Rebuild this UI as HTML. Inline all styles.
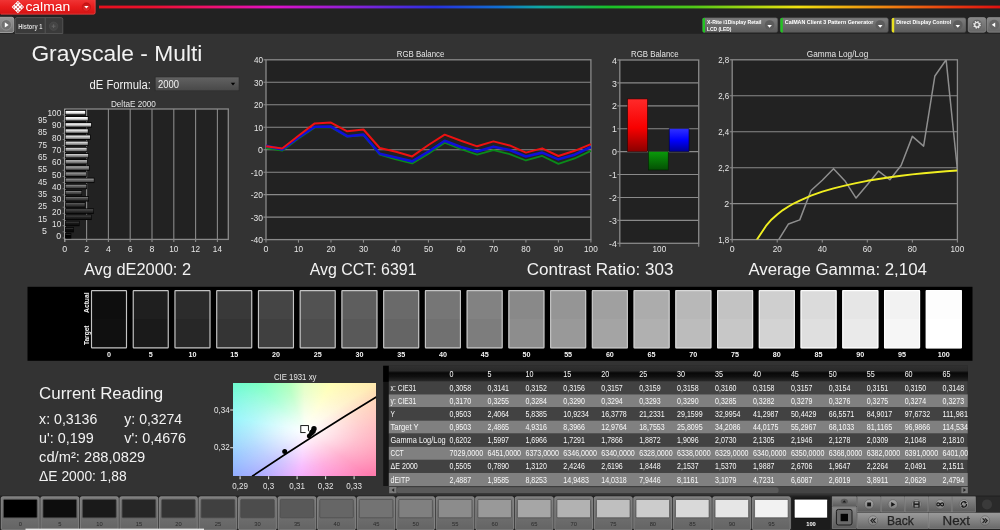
<!DOCTYPE html>
<html lang="en"><head><meta charset="utf-8"><title>Calman - Grayscale Multi</title>
<style>html,body{margin:0;padding:0;background:#333;overflow:hidden}body{width:1000px;height:530px;position:relative;font-family:"Liberation Sans", "DejaVu Sans", sans-serif}svg{position:absolute;left:0;top:0;display:block;will-change:transform}svg text{font-family:"Liberation Sans", "DejaVu Sans", sans-serif;white-space:pre}</style></head><body>
<div id="cie" style="position:absolute;left:233.2px;top:382.7px;width:143.1px;height:93.6px;background:radial-gradient(ellipse 90% 90% at 50% 51%, rgba(255,255,255,1) 0%, rgba(255,255,255,0.84) 16%, rgba(255,255,255,0.5) 42%, rgba(255,255,255,0.2) 72%, rgba(255,255,255,0) 100%),conic-gradient(from 0deg at 50% 51%, #d4ffa4 0deg, #ffff90 30deg, #ffe8a0 56deg, #ffc4a0 68deg, #ff98a0 88deg, #ff5c9c 125deg, #ff60c0 150deg, #f080ff 185deg, #8c8cff 225deg, #70b0ff 250deg, #60f0f8 280deg, #50ffb0 315deg, #80ff98 340deg, #d4ffa4 360deg)"></div>
<svg width="1000" height="530" viewBox="0 0 1000 530">
<defs>
<linearGradient id="rainbow" x1="0" x2="1" y1="0" y2="0"><stop offset="0" stop-color="#e8101c"/><stop offset="0.06" stop-color="#ec1030"/><stop offset="0.12" stop-color="#f0106a"/><stop offset="0.194" stop-color="#e010c8"/><stop offset="0.276" stop-color="#9020d8"/><stop offset="0.373" stop-color="#2830e0"/><stop offset="0.445" stop-color="#1070d0"/><stop offset="0.49" stop-color="#10a8a0"/><stop offset="0.566" stop-color="#18c028"/><stop offset="0.66" stop-color="#50c818"/><stop offset="0.73" stop-color="#b0d810"/><stop offset="0.776" stop-color="#f0e010"/><stop offset="0.878" stop-color="#f08010"/><stop offset="0.95" stop-color="#e83810"/><stop offset="1" stop-color="#e01010"/></linearGradient>
<linearGradient id="redbtn" x1="0" x2="0" y1="0" y2="1"><stop offset="0" stop-color="#f03434"/><stop offset="0.5" stop-color="#e81c1c"/><stop offset="1" stop-color="#d21313"/></linearGradient>
<linearGradient id="gbtn" x1="0" x2="0" y1="0" y2="1"><stop offset="0" stop-color="#7e7e7e"/><stop offset="1" stop-color="#5a5a5a"/></linearGradient>
<linearGradient id="redc" x1="0" x2="0" y1="0" y2="1"><stop offset="0" stop-color="#c41010"/><stop offset="1" stop-color="#ea3030"/></linearGradient>
<linearGradient id="gbtn3" x1="0" x2="0" y1="0" y2="1"><stop offset="0" stop-color="#989898"/><stop offset="1" stop-color="#707070"/></linearGradient>
<linearGradient id="gbtn2" x1="0" x2="0" y1="0" y2="1"><stop offset="0" stop-color="#888"/><stop offset="1" stop-color="#666"/></linearGradient>
<linearGradient id="ddl" x1="0" x2="0" y1="0" y2="1"><stop offset="0" stop-color="#626262"/><stop offset="1" stop-color="#484848"/></linearGradient>
<linearGradient id="thead" x1="0" x2="0" y1="0" y2="1"><stop offset="0" stop-color="#303030"/><stop offset="0.32" stop-color="#2a2a2a"/><stop offset="0.46" stop-color="#080808"/><stop offset="0.7" stop-color="#101010"/><stop offset="1" stop-color="#282828"/></linearGradient>
<linearGradient id="barR" x1="0" x2="0" y1="0" y2="1"><stop offset="0" stop-color="#ff2a2a"/><stop offset="0.55" stop-color="#f80000"/><stop offset="1" stop-color="#8a0000"/></linearGradient>
<linearGradient id="barG" x1="0" x2="0" y1="0" y2="1"><stop offset="0" stop-color="#0a9a0a"/><stop offset="1" stop-color="#045004"/></linearGradient>
<linearGradient id="barB" x1="0" x2="0" y1="0" y2="1"><stop offset="0" stop-color="#3030ff"/><stop offset="0.5" stop-color="#0000ff"/><stop offset="1" stop-color="#000090"/></linearGradient>
</defs>
<rect x="0.00" y="0.00" width="1000.00" height="33.80" fill="#222222" />
<rect x="0.00" y="495.50" width="1000.00" height="34.50" fill="#232323" />
<path d="M0 0H95.5V12.5Q95.5 14.5 93.5 14.5H1Q0 14.5 0 13.5Z" fill="url(#redbtn)"/>
<path d="M95.1 0V12.5Q95.1 14.1 93.5 14.1H1" fill="none" stroke="#f07070" stroke-opacity="0.55" stroke-width="0.8"/>
<rect x="99.00" y="5.60" width="901.00" height="2.80" fill="url(#rainbow)" />
<path d="M17.9 0.7000000000000002L24.099999999999998 7.0L17.9 13.3L11.7 7.0Z" fill="#fff"/>
<g fill="#c22424" fill-opacity="0.85">
<rect x="17.05" y="6.15" width="1.7" height="1.7"/>
<rect x="19.15" y="8.25" width="1.7" height="1.7"/>
<rect x="14.95" y="8.25" width="1.7" height="1.7"/>
<rect x="19.15" y="4.05" width="1.7" height="1.7"/>
<rect x="14.95" y="4.05" width="1.7" height="1.7"/>
</g><g fill="#d63030" fill-opacity="0.7">
<rect x="17.15" y="10.45" width="1.5" height="1.5"/>
<rect x="17.15" y="2.05" width="1.5" height="1.5"/>
<rect x="21.35" y="6.25" width="1.5" height="1.5"/>
<rect x="12.95" y="6.25" width="1.5" height="1.5"/>
</g>
<text x="25.40" y="10.60" font-size="12.8" fill="#ffffff" textLength="44.80" lengthAdjust="spacingAndGlyphs">calman</text>
<circle cx="86.4" cy="7" r="4.2" fill="url(#redc)" stroke="#c01212" stroke-width="0.7"/>
<path d="M84.2 5.9H88.6L86.4 8.6Z" fill="#fff"/>
<rect x="-2" y="17.3" width="15.8" height="15.2" rx="2" fill="url(#gbtn3)" stroke="#b0b0b0" stroke-width="0.8"/>
<circle cx="6.3" cy="24.9" r="5.2" fill="#707070" stroke="#a0a0a0" stroke-width="0.6"/>
<path d="M4.8 22.3L8.6 24.9L4.8 27.5Z" fill="#fff"/>
<path d="M15.2 33.5V19.3Q15.2 17.6 17 17.6H61Q62.8 17.6 62.8 19.3V33.5Z" fill="#3a3a3a" stroke="#5c5c5c" stroke-width="0.8"/>
<path d="M45.2 18V33.5" stroke="#5c5c5c" stroke-width="0.8"/>
<text x="18.20" y="28.70" font-size="6.3" fill="#d8d8d8" font-weight="bold" textLength="24.20" lengthAdjust="spacingAndGlyphs">History 1</text>
<circle cx="53.6" cy="26.2" r="4.2" fill="#444" stroke="#505050" stroke-width="0.5"/>
<path d="M53.6 24.3V28.1M51.7 26.2H55.5" stroke="#666" stroke-width="0.9"/>
<rect x="702.4" y="17.8" width="75.39999999999998" height="14.8" rx="2" fill="url(#gbtn)" stroke="#444" stroke-width="0.5"/>
<path d="M702.6 19.3Q702.6 18 704.0 18H705.0V32.4H704.0Q702.6 32.4 702.6 31Z" fill="#22c422"/>
<circle cx="769.5999999999999" cy="25.0" r="4.8" fill="#5c5c5c"/>
<path d="M767.3 24.9H771.8999999999999L769.5999999999999 27.8Z" fill="#fff"/>
<text x="707.00" y="24.00" font-size="5.6" fill="#fff" font-weight="bold" textLength="54.50" lengthAdjust="spacingAndGlyphs">X-Rite i1Display Retail</text>
<text x="707.00" y="30.80" font-size="5.6" fill="#fff" font-weight="bold" textLength="24.50" lengthAdjust="spacingAndGlyphs">LCD (LED)</text>
<rect x="780.2" y="17.8" width="108.19999999999993" height="14.8" rx="2" fill="url(#gbtn)" stroke="#444" stroke-width="0.5"/>
<path d="M780.4000000000001 19.3Q780.4000000000001 18 781.8000000000001 18H782.8000000000001V32.4H781.8000000000001Q780.4000000000001 32.4 780.4000000000001 31Z" fill="#22c422"/>
<circle cx="880.1999999999999" cy="25.0" r="4.8" fill="#5c5c5c"/>
<path d="M877.9 24.9H882.4999999999999L880.1999999999999 27.8Z" fill="#fff"/>
<text x="784.80" y="24.00" font-size="5.6" fill="#fff" font-weight="bold" textLength="88.50" lengthAdjust="spacingAndGlyphs">CalMAN Client 3 Pattern Generator</text>
<rect x="891.6" y="17.8" width="74.39999999999998" height="14.8" rx="2" fill="url(#gbtn)" stroke="#444" stroke-width="0.5"/>
<path d="M891.8000000000001 19.3Q891.8000000000001 18 893.2 18H894.2V32.4H893.2Q891.8000000000001 32.4 891.8000000000001 31Z" fill="#e8e020"/>
<circle cx="957.8" cy="25.0" r="4.8" fill="#5c5c5c"/>
<path d="M955.5 24.9H960.0999999999999L957.8 27.8Z" fill="#fff"/>
<text x="896.20" y="24.00" font-size="5.6" fill="#fff" font-weight="bold" textLength="55.00" lengthAdjust="spacingAndGlyphs">Direct Display Control</text>
<rect x="968.2" y="17.6" width="17.6" height="14.6" rx="2" fill="url(#gbtn2)" stroke="#999" stroke-width="0.6"/>
<circle cx="977.0" cy="24.8" r="5.0" fill="#666"/>
<circle cx="977.0" cy="24.8" r="3.2" fill="none" stroke="#f0f0f0" stroke-width="1.3" stroke-dasharray="1.3 1.213"/>
<circle cx="977.0" cy="24.8" r="2.3" fill="none" stroke="#f0f0f0" stroke-width="1.2"/>
<rect x="987.0" y="17.6" width="16" height="14.6" rx="2" fill="url(#gbtn2)" stroke="#999" stroke-width="0.6"/>
<circle cx="994.2" cy="24.8" r="5.0" fill="#666"/>
<path d="M995.2 22.4V27.2L991.8 24.8Z" fill="#fff"/>
<text x="31.40" y="61.40" font-size="22" fill="#f2f2f2" textLength="171.00" lengthAdjust="spacingAndGlyphs">Grayscale - Multi</text>
<text x="89.60" y="89.00" font-size="12" fill="#f2f2f2" textLength="61.20" lengthAdjust="spacingAndGlyphs">dE Formula:</text>
<rect x="155.2" y="77.0" width="83.8" height="13.8" fill="url(#ddl)" stroke="#2c2c2c" stroke-width="0.6"/>
<text x="158.00" y="88.20" font-size="10.5" fill="#f2f2f2" textLength="21.00" lengthAdjust="spacingAndGlyphs">2000</text>
<path d="M230.8 82.8H235.2L233 85.6Z" fill="#000"/>
<text x="133.40" y="106.60" font-size="8.2" fill="#e6e6e6" text-anchor="middle" textLength="45.00" lengthAdjust="spacingAndGlyphs">DeltaE 2000</text>
<rect x="64.80" y="109.00" width="163.50" height="130.40" fill="#222222" />
<path d="M86.60 109.0V241.9" stroke="#8a8a8a" stroke-width="1.1"/>
<path d="M108.40 109.0V241.9" stroke="#8a8a8a" stroke-width="1.1"/>
<path d="M130.20 109.0V241.9" stroke="#8a8a8a" stroke-width="1.1"/>
<path d="M152.00 109.0V241.9" stroke="#8a8a8a" stroke-width="1.1"/>
<path d="M173.80 109.0V241.9" stroke="#8a8a8a" stroke-width="1.1"/>
<path d="M195.60 109.0V241.9" stroke="#8a8a8a" stroke-width="1.1"/>
<path d="M217.40 109.0V241.9" stroke="#8a8a8a" stroke-width="1.1"/>
<rect x="64.8" y="109.0" width="163.50" height="130.40" fill="none" stroke="#8a8a8a" stroke-width="1.3"/>
<path d="M64.8 109.0V241.9" stroke="#a8a8a8" stroke-width="1.2"/>
<defs>
<linearGradient id="db0" x1="0" x2="0" y1="0" y2="1"><stop offset="0" stop-color="rgb(60,60,60)"/><stop offset="0.35" stop-color="rgb(0,0,0)"/><stop offset="1" stop-color="rgb(0,0,0)"/></linearGradient>
<linearGradient id="db1" x1="0" x2="0" y1="0" y2="1"><stop offset="0" stop-color="rgb(73,73,73)"/><stop offset="0.35" stop-color="rgb(13,13,13)"/><stop offset="1" stop-color="rgb(7,7,7)"/></linearGradient>
<linearGradient id="db2" x1="0" x2="0" y1="0" y2="1"><stop offset="0" stop-color="rgb(86,86,86)"/><stop offset="0.35" stop-color="rgb(26,26,26)"/><stop offset="1" stop-color="rgb(14,14,14)"/></linearGradient>
<linearGradient id="db3" x1="0" x2="0" y1="0" y2="1"><stop offset="0" stop-color="rgb(98,98,98)"/><stop offset="0.35" stop-color="rgb(38,38,38)"/><stop offset="1" stop-color="rgb(20,20,20)"/></linearGradient>
<linearGradient id="db4" x1="0" x2="0" y1="0" y2="1"><stop offset="0" stop-color="rgb(111,111,111)"/><stop offset="0.35" stop-color="rgb(51,51,51)"/><stop offset="1" stop-color="rgb(28,28,28)"/></linearGradient>
<linearGradient id="db5" x1="0" x2="0" y1="0" y2="1"><stop offset="0" stop-color="rgb(124,124,124)"/><stop offset="0.35" stop-color="rgb(64,64,64)"/><stop offset="1" stop-color="rgb(35,35,35)"/></linearGradient>
<linearGradient id="db6" x1="0" x2="0" y1="0" y2="1"><stop offset="0" stop-color="rgb(136,136,136)"/><stop offset="0.35" stop-color="rgb(76,76,76)"/><stop offset="1" stop-color="rgb(41,41,41)"/></linearGradient>
<linearGradient id="db7" x1="0" x2="0" y1="0" y2="1"><stop offset="0" stop-color="rgb(149,149,149)"/><stop offset="0.35" stop-color="rgb(89,89,89)"/><stop offset="1" stop-color="rgb(48,48,48)"/></linearGradient>
<linearGradient id="db8" x1="0" x2="0" y1="0" y2="1"><stop offset="0" stop-color="rgb(162,162,162)"/><stop offset="0.35" stop-color="rgb(102,102,102)"/><stop offset="1" stop-color="rgb(56,56,56)"/></linearGradient>
<linearGradient id="db9" x1="0" x2="0" y1="0" y2="1"><stop offset="0" stop-color="rgb(175,175,175)"/><stop offset="0.35" stop-color="rgb(115,115,115)"/><stop offset="1" stop-color="rgb(63,63,63)"/></linearGradient>
<linearGradient id="db10" x1="0" x2="0" y1="0" y2="1"><stop offset="0" stop-color="rgb(188,188,188)"/><stop offset="0.35" stop-color="rgb(128,128,128)"/><stop offset="1" stop-color="rgb(70,70,70)"/></linearGradient>
<linearGradient id="db11" x1="0" x2="0" y1="0" y2="1"><stop offset="0" stop-color="rgb(200,200,200)"/><stop offset="0.35" stop-color="rgb(140,140,140)"/><stop offset="1" stop-color="rgb(77,77,77)"/></linearGradient>
<linearGradient id="db12" x1="0" x2="0" y1="0" y2="1"><stop offset="0" stop-color="rgb(213,213,213)"/><stop offset="0.35" stop-color="rgb(153,153,153)"/><stop offset="1" stop-color="rgb(84,84,84)"/></linearGradient>
<linearGradient id="db13" x1="0" x2="0" y1="0" y2="1"><stop offset="0" stop-color="rgb(226,226,226)"/><stop offset="0.35" stop-color="rgb(166,166,166)"/><stop offset="1" stop-color="rgb(91,91,91)"/></linearGradient>
<linearGradient id="db14" x1="0" x2="0" y1="0" y2="1"><stop offset="0" stop-color="rgb(238,238,238)"/><stop offset="0.35" stop-color="rgb(178,178,178)"/><stop offset="1" stop-color="rgb(97,97,97)"/></linearGradient>
<linearGradient id="db15" x1="0" x2="0" y1="0" y2="1"><stop offset="0" stop-color="rgb(251,251,251)"/><stop offset="0.35" stop-color="rgb(191,191,191)"/><stop offset="1" stop-color="rgb(105,105,105)"/></linearGradient>
<linearGradient id="db16" x1="0" x2="0" y1="0" y2="1"><stop offset="0" stop-color="rgb(255,255,255)"/><stop offset="0.35" stop-color="rgb(204,204,204)"/><stop offset="1" stop-color="rgb(112,112,112)"/></linearGradient>
<linearGradient id="db17" x1="0" x2="0" y1="0" y2="1"><stop offset="0" stop-color="rgb(255,255,255)"/><stop offset="0.35" stop-color="rgb(217,217,217)"/><stop offset="1" stop-color="rgb(119,119,119)"/></linearGradient>
<linearGradient id="db18" x1="0" x2="0" y1="0" y2="1"><stop offset="0" stop-color="rgb(255,255,255)"/><stop offset="0.35" stop-color="rgb(230,230,230)"/><stop offset="1" stop-color="rgb(126,126,126)"/></linearGradient>
<linearGradient id="db19" x1="0" x2="0" y1="0" y2="1"><stop offset="0" stop-color="rgb(255,255,255)"/><stop offset="0.35" stop-color="rgb(242,242,242)"/><stop offset="1" stop-color="rgb(133,133,133)"/></linearGradient>
<linearGradient id="db20" x1="0" x2="0" y1="0" y2="1"><stop offset="0" stop-color="rgb(255,255,255)"/><stop offset="0.35" stop-color="rgb(255,255,255)"/><stop offset="1" stop-color="rgb(140,140,140)"/></linearGradient>
</defs>
<rect x="65.00" y="233.10" width="6.30" height="5.4" fill="#050505"/>
<rect x="65.60" y="234.05" width="5.10" height="3.5" fill="url(#db0)"/>
<path d="M62.60 238.00H64.80" stroke="#8a8a8a" stroke-width="0.8"/>
<text x="61.20" y="239.20" font-size="8.8" fill="#e6e6e6" text-anchor="end">0</text>
<rect x="65.00" y="226.94" width="8.90" height="5.4" fill="#050505"/>
<rect x="65.60" y="227.89" width="7.70" height="3.5" fill="url(#db1)"/>
<path d="M62.60 231.84H64.80" stroke="#8a8a8a" stroke-width="0.8"/>
<text x="47.00" y="233.94" font-size="8.8" fill="#e6e6e6" text-anchor="end">5</text>
<rect x="65.00" y="220.78" width="14.60" height="5.4" fill="#050505"/>
<rect x="65.60" y="221.73" width="13.40" height="3.5" fill="url(#db2)"/>
<path d="M62.60 225.68H64.80" stroke="#8a8a8a" stroke-width="0.8"/>
<text x="61.20" y="226.88" font-size="8.8" fill="#e6e6e6" text-anchor="end" textLength="9.10" lengthAdjust="spacingAndGlyphs">10</text>
<rect x="65.00" y="214.62" width="26.73" height="5.4" fill="#050505"/>
<rect x="65.60" y="215.57" width="25.53" height="3.5" fill="url(#db3)"/>
<path d="M62.60 219.52H64.80" stroke="#8a8a8a" stroke-width="0.8"/>
<text x="47.00" y="221.62" font-size="8.8" fill="#e6e6e6" text-anchor="end" textLength="9.10" lengthAdjust="spacingAndGlyphs">15</text>
<rect x="65.00" y="208.46" width="28.85" height="5.4" fill="#050505"/>
<rect x="65.60" y="209.41" width="27.65" height="3.5" fill="url(#db4)"/>
<path d="M62.60 213.36H64.80" stroke="#8a8a8a" stroke-width="0.8"/>
<text x="61.20" y="214.56" font-size="8.8" fill="#e6e6e6" text-anchor="end" textLength="9.10" lengthAdjust="spacingAndGlyphs">20</text>
<rect x="65.00" y="202.30" width="20.41" height="5.4" fill="#050505"/>
<rect x="65.60" y="203.25" width="19.21" height="3.5" fill="url(#db5)"/>
<path d="M62.60 207.20H64.80" stroke="#8a8a8a" stroke-width="0.8"/>
<text x="47.00" y="209.30" font-size="8.8" fill="#e6e6e6" text-anchor="end" textLength="9.10" lengthAdjust="spacingAndGlyphs">25</text>
<rect x="65.00" y="196.14" width="23.78" height="5.4" fill="#050505"/>
<rect x="65.60" y="197.09" width="22.58" height="3.5" fill="url(#db6)"/>
<path d="M62.60 201.04H64.80" stroke="#8a8a8a" stroke-width="0.8"/>
<text x="61.20" y="202.24" font-size="8.8" fill="#e6e6e6" text-anchor="end" textLength="9.10" lengthAdjust="spacingAndGlyphs">30</text>
<rect x="65.00" y="189.98" width="17.05" height="5.4" fill="#050505"/>
<rect x="65.60" y="190.93" width="15.85" height="3.5" fill="url(#db7)"/>
<path d="M62.60 194.88H64.80" stroke="#8a8a8a" stroke-width="0.8"/>
<text x="47.00" y="196.98" font-size="8.8" fill="#e6e6e6" text-anchor="end" textLength="9.10" lengthAdjust="spacingAndGlyphs">35</text>
<rect x="65.00" y="183.82" width="21.98" height="5.4" fill="#050505"/>
<rect x="65.60" y="184.77" width="20.78" height="3.5" fill="url(#db8)"/>
<path d="M62.60 188.72H64.80" stroke="#8a8a8a" stroke-width="0.8"/>
<text x="61.20" y="189.92" font-size="8.8" fill="#e6e6e6" text-anchor="end" textLength="9.10" lengthAdjust="spacingAndGlyphs">40</text>
<rect x="65.00" y="177.66" width="29.41" height="5.4" fill="#050505"/>
<rect x="65.60" y="178.61" width="28.21" height="3.5" fill="url(#db9)"/>
<path d="M62.60 182.56H64.80" stroke="#8a8a8a" stroke-width="0.8"/>
<text x="47.00" y="184.66" font-size="8.8" fill="#e6e6e6" text-anchor="end" textLength="9.10" lengthAdjust="spacingAndGlyphs">45</text>
<rect x="65.00" y="171.50" width="21.72" height="5.4" fill="#050505"/>
<rect x="65.60" y="172.45" width="20.52" height="3.5" fill="url(#db10)"/>
<path d="M62.60 176.40H64.80" stroke="#8a8a8a" stroke-width="0.8"/>
<text x="61.20" y="177.60" font-size="8.8" fill="#e6e6e6" text-anchor="end" textLength="9.10" lengthAdjust="spacingAndGlyphs">50</text>
<rect x="65.00" y="165.34" width="24.57" height="5.4" fill="#050505"/>
<rect x="65.60" y="166.29" width="23.37" height="3.5" fill="url(#db11)"/>
<path d="M62.60 170.24H64.80" stroke="#8a8a8a" stroke-width="0.8"/>
<text x="47.00" y="172.34" font-size="8.8" fill="#e6e6e6" text-anchor="end" textLength="9.10" lengthAdjust="spacingAndGlyphs">55</text>
<rect x="65.00" y="159.18" width="22.64" height="5.4" fill="#050505"/>
<rect x="65.60" y="160.13" width="21.44" height="3.5" fill="url(#db12)"/>
<path d="M62.60 164.08H64.80" stroke="#8a8a8a" stroke-width="0.8"/>
<text x="61.20" y="165.28" font-size="8.8" fill="#e6e6e6" text-anchor="end" textLength="9.10" lengthAdjust="spacingAndGlyphs">60</text>
<rect x="65.00" y="153.02" width="23.75" height="5.4" fill="#050505"/>
<rect x="65.60" y="153.97" width="22.55" height="3.5" fill="url(#db13)"/>
<path d="M62.60 157.92H64.80" stroke="#8a8a8a" stroke-width="0.8"/>
<text x="47.00" y="160.02" font-size="8.8" fill="#e6e6e6" text-anchor="end" textLength="9.10" lengthAdjust="spacingAndGlyphs">65</text>
<rect x="65.00" y="146.86" width="22.32" height="5.4" fill="#050505"/>
<rect x="65.60" y="147.81" width="21.12" height="3.5" fill="url(#db14)"/>
<path d="M62.60 151.76H64.80" stroke="#8a8a8a" stroke-width="0.8"/>
<text x="61.20" y="152.96" font-size="8.8" fill="#e6e6e6" text-anchor="end" textLength="9.10" lengthAdjust="spacingAndGlyphs">70</text>
<rect x="65.00" y="140.70" width="23.41" height="5.4" fill="#050505"/>
<rect x="65.60" y="141.65" width="22.21" height="3.5" fill="url(#db15)"/>
<path d="M62.60 145.60H64.80" stroke="#8a8a8a" stroke-width="0.8"/>
<text x="47.00" y="147.70" font-size="8.8" fill="#e6e6e6" text-anchor="end" textLength="9.10" lengthAdjust="spacingAndGlyphs">75</text>
<rect x="65.00" y="134.54" width="25.59" height="5.4" fill="#050505"/>
<rect x="65.60" y="135.49" width="24.39" height="3.5" fill="url(#db16)"/>
<path d="M62.60 139.44H64.80" stroke="#8a8a8a" stroke-width="0.8"/>
<text x="61.20" y="140.64" font-size="8.8" fill="#e6e6e6" text-anchor="end" textLength="9.10" lengthAdjust="spacingAndGlyphs">80</text>
<rect x="65.00" y="128.38" width="23.41" height="5.4" fill="#050505"/>
<rect x="65.60" y="129.33" width="22.21" height="3.5" fill="url(#db17)"/>
<path d="M62.60 133.28H64.80" stroke="#8a8a8a" stroke-width="0.8"/>
<text x="47.00" y="135.38" font-size="8.8" fill="#e6e6e6" text-anchor="end" textLength="9.10" lengthAdjust="spacingAndGlyphs">85</text>
<rect x="65.00" y="122.22" width="26.68" height="5.4" fill="#050505"/>
<rect x="65.60" y="123.17" width="25.48" height="3.5" fill="url(#db18)"/>
<path d="M62.60 127.12H64.80" stroke="#8a8a8a" stroke-width="0.8"/>
<text x="61.20" y="128.32" font-size="8.8" fill="#e6e6e6" text-anchor="end" textLength="9.10" lengthAdjust="spacingAndGlyphs">90</text>
<rect x="65.00" y="116.06" width="23.41" height="5.4" fill="#050505"/>
<rect x="65.60" y="117.01" width="22.21" height="3.5" fill="url(#db19)"/>
<path d="M62.60 120.96H64.80" stroke="#8a8a8a" stroke-width="0.8"/>
<text x="47.00" y="123.06" font-size="8.8" fill="#e6e6e6" text-anchor="end" textLength="9.10" lengthAdjust="spacingAndGlyphs">95</text>
<rect x="65.00" y="109.90" width="20.79" height="5.4" fill="#050505"/>
<rect x="65.60" y="110.85" width="19.59" height="3.5" fill="url(#db20)"/>
<path d="M62.60 114.80H64.80" stroke="#8a8a8a" stroke-width="0.8"/>
<text x="61.20" y="116.00" font-size="8.8" fill="#e6e6e6" text-anchor="end" textLength="13.65" lengthAdjust="spacingAndGlyphs">100</text>
<text x="64.80" y="252.00" font-size="8.8" fill="#e6e6e6" text-anchor="middle">0</text>
<text x="86.60" y="252.00" font-size="8.8" fill="#e6e6e6" text-anchor="middle">2</text>
<text x="108.40" y="252.00" font-size="8.8" fill="#e6e6e6" text-anchor="middle">4</text>
<text x="130.20" y="252.00" font-size="8.8" fill="#e6e6e6" text-anchor="middle">6</text>
<text x="152.00" y="252.00" font-size="8.8" fill="#e6e6e6" text-anchor="middle">8</text>
<text x="173.80" y="252.00" font-size="8.8" fill="#e6e6e6" text-anchor="middle" textLength="9.10" lengthAdjust="spacingAndGlyphs">10</text>
<text x="195.60" y="252.00" font-size="8.8" fill="#e6e6e6" text-anchor="middle" textLength="9.10" lengthAdjust="spacingAndGlyphs">12</text>
<text x="217.40" y="252.00" font-size="8.8" fill="#e6e6e6" text-anchor="middle" textLength="9.10" lengthAdjust="spacingAndGlyphs">14</text>
<text x="420.60" y="56.60" font-size="8.2" fill="#e6e6e6" text-anchor="middle" textLength="47.50" lengthAdjust="spacingAndGlyphs">RGB Balance</text>
<rect x="266.00" y="59.80" width="324.90" height="179.80" fill="#222222" />
<path d="M263.5 217.12H590.9" stroke="#8a8a8a" stroke-width="1.1"/>
<path d="M263.5 194.65H590.9" stroke="#8a8a8a" stroke-width="1.1"/>
<path d="M263.5 172.18H590.9" stroke="#8a8a8a" stroke-width="1.1"/>
<path d="M263.5 149.70H590.9" stroke="#8a8a8a" stroke-width="1.1"/>
<path d="M263.5 127.22H590.9" stroke="#8a8a8a" stroke-width="1.1"/>
<path d="M263.5 104.75H590.9" stroke="#8a8a8a" stroke-width="1.1"/>
<path d="M263.5 82.28H590.9" stroke="#8a8a8a" stroke-width="1.1"/>
<rect x="266.0" y="59.8" width="324.90" height="179.80" fill="none" stroke="#8a8a8a" stroke-width="1.3"/>
<path d="M263.5 239.60H266.0" stroke="#8a8a8a" stroke-width="1.1"/>
<text x="263.00" y="243.20" font-size="8.8" fill="#e6e6e6" text-anchor="end" textLength="12.30" lengthAdjust="spacingAndGlyphs">-40</text>
<text x="263.00" y="220.72" font-size="8.8" fill="#e6e6e6" text-anchor="end" textLength="12.30" lengthAdjust="spacingAndGlyphs">-30</text>
<text x="263.00" y="198.25" font-size="8.8" fill="#e6e6e6" text-anchor="end" textLength="12.30" lengthAdjust="spacingAndGlyphs">-20</text>
<text x="263.00" y="175.78" font-size="8.8" fill="#e6e6e6" text-anchor="end" textLength="12.30" lengthAdjust="spacingAndGlyphs">-10</text>
<text x="263.00" y="153.30" font-size="8.8" fill="#e6e6e6" text-anchor="end">0</text>
<text x="263.00" y="130.82" font-size="8.8" fill="#e6e6e6" text-anchor="end" textLength="9.10" lengthAdjust="spacingAndGlyphs">10</text>
<text x="263.00" y="108.35" font-size="8.8" fill="#e6e6e6" text-anchor="end" textLength="9.10" lengthAdjust="spacingAndGlyphs">20</text>
<text x="263.00" y="85.88" font-size="8.8" fill="#e6e6e6" text-anchor="end" textLength="9.10" lengthAdjust="spacingAndGlyphs">30</text>
<path d="M263.5 59.80H266.0" stroke="#8a8a8a" stroke-width="1.1"/>
<text x="263.00" y="63.40" font-size="8.8" fill="#e6e6e6" text-anchor="end" textLength="9.10" lengthAdjust="spacingAndGlyphs">40</text>
<path d="M266.00 239.6V242.6" stroke="#8a8a8a" stroke-width="1.1"/>
<text x="266.00" y="252.00" font-size="8.8" fill="#e6e6e6" text-anchor="middle">0</text>
<path d="M298.49 239.6V242.6" stroke="#8a8a8a" stroke-width="1.1"/>
<text x="298.49" y="252.00" font-size="8.8" fill="#e6e6e6" text-anchor="middle" textLength="9.10" lengthAdjust="spacingAndGlyphs">10</text>
<path d="M330.98 239.6V242.6" stroke="#8a8a8a" stroke-width="1.1"/>
<text x="330.98" y="252.00" font-size="8.8" fill="#e6e6e6" text-anchor="middle" textLength="9.10" lengthAdjust="spacingAndGlyphs">20</text>
<path d="M363.47 239.6V242.6" stroke="#8a8a8a" stroke-width="1.1"/>
<text x="363.47" y="252.00" font-size="8.8" fill="#e6e6e6" text-anchor="middle" textLength="9.10" lengthAdjust="spacingAndGlyphs">30</text>
<path d="M395.96 239.6V242.6" stroke="#8a8a8a" stroke-width="1.1"/>
<text x="395.96" y="252.00" font-size="8.8" fill="#e6e6e6" text-anchor="middle" textLength="9.10" lengthAdjust="spacingAndGlyphs">40</text>
<path d="M428.45 239.6V242.6" stroke="#8a8a8a" stroke-width="1.1"/>
<text x="428.45" y="252.00" font-size="8.8" fill="#e6e6e6" text-anchor="middle" textLength="9.10" lengthAdjust="spacingAndGlyphs">50</text>
<path d="M460.94 239.6V242.6" stroke="#8a8a8a" stroke-width="1.1"/>
<text x="460.94" y="252.00" font-size="8.8" fill="#e6e6e6" text-anchor="middle" textLength="9.10" lengthAdjust="spacingAndGlyphs">60</text>
<path d="M493.43 239.6V242.6" stroke="#8a8a8a" stroke-width="1.1"/>
<text x="493.43" y="252.00" font-size="8.8" fill="#e6e6e6" text-anchor="middle" textLength="9.10" lengthAdjust="spacingAndGlyphs">70</text>
<path d="M525.92 239.6V242.6" stroke="#8a8a8a" stroke-width="1.1"/>
<text x="525.92" y="252.00" font-size="8.8" fill="#e6e6e6" text-anchor="middle" textLength="9.10" lengthAdjust="spacingAndGlyphs">80</text>
<path d="M558.41 239.6V242.6" stroke="#8a8a8a" stroke-width="1.1"/>
<text x="558.41" y="252.00" font-size="8.8" fill="#e6e6e6" text-anchor="middle" textLength="9.10" lengthAdjust="spacingAndGlyphs">90</text>
<path d="M590.90 239.6V242.6" stroke="#8a8a8a" stroke-width="1.1"/>
<text x="590.90" y="252.00" font-size="8.8" fill="#e6e6e6" text-anchor="middle" textLength="13.65" lengthAdjust="spacingAndGlyphs">100</text>
<polyline points="266.00,148.01 282.25,150.71 298.49,138.46 314.74,127.45 330.98,127.22 347.23,136.66 363.47,135.09 379.71,154.64 395.96,159.36 412.20,163.41 428.45,153.75 444.69,142.73 460.94,149.25 477.18,154.64 493.43,150.04 509.67,154.19 525.92,160.49 542.16,155.99 558.41,163.86 574.65,158.47 590.90,150.82" fill="none" stroke="#0a8a1a" stroke-width="1.8" stroke-linejoin="round"/>
<polyline points="266.00,145.88 282.25,149.36 298.49,137.34 314.74,126.78 330.98,126.55 347.23,136.21 363.47,134.64 379.71,153.75 395.96,157.57 412.20,161.39 428.45,151.72 444.69,140.71 460.94,147.00 477.18,151.39 493.43,146.67 509.67,150.04 525.92,156.44 542.16,152.62 558.41,159.36 574.65,154.64 590.90,147.00" fill="none" stroke="#1010d8" stroke-width="2.6" stroke-linejoin="round"/>
<polyline points="266.00,146.33 282.25,148.58 298.49,135.77 314.74,123.40 330.98,122.51 347.23,131.27 363.47,129.47 379.71,148.01 395.96,151.72 412.20,156.44 428.45,144.98 444.69,134.64 460.94,140.71 477.18,146.33 493.43,141.38 509.67,145.43 525.92,152.62 542.16,148.35 558.41,155.99 574.65,150.82 590.90,144.08" fill="none" stroke="#ee1111" stroke-width="2.0" stroke-linejoin="round"/>
<text x="654.80" y="56.60" font-size="8.2" fill="#e6e6e6" text-anchor="middle" textLength="47.50" lengthAdjust="spacingAndGlyphs">RGB Balance</text>
<rect x="619.80" y="60.00" width="78.90" height="183.30" fill="#222222" />
<path d="M617.3 220.39H698.7" stroke="#8a8a8a" stroke-width="1.1"/>
<path d="M617.3 197.48H698.7" stroke="#8a8a8a" stroke-width="1.1"/>
<path d="M617.3 174.56H698.7" stroke="#8a8a8a" stroke-width="1.1"/>
<path d="M617.3 151.65H698.7" stroke="#8a8a8a" stroke-width="1.1"/>
<path d="M617.3 128.74H698.7" stroke="#8a8a8a" stroke-width="1.1"/>
<path d="M617.3 105.83H698.7" stroke="#8a8a8a" stroke-width="1.1"/>
<path d="M617.3 82.91H698.7" stroke="#8a8a8a" stroke-width="1.1"/>
<rect x="619.8" y="60.0" width="78.90" height="183.30" fill="none" stroke="#8a8a8a" stroke-width="1.3"/>
<path d="M617.3 243.30H619.8" stroke="#8a8a8a" stroke-width="1.1"/>
<text x="616.80" y="246.90" font-size="8.8" fill="#e6e6e6" text-anchor="end" textLength="7.75" lengthAdjust="spacingAndGlyphs">-4</text>
<text x="616.80" y="223.99" font-size="8.8" fill="#e6e6e6" text-anchor="end" textLength="7.75" lengthAdjust="spacingAndGlyphs">-3</text>
<text x="616.80" y="201.08" font-size="8.8" fill="#e6e6e6" text-anchor="end" textLength="7.75" lengthAdjust="spacingAndGlyphs">-2</text>
<text x="616.80" y="178.16" font-size="8.8" fill="#e6e6e6" text-anchor="end" textLength="7.75" lengthAdjust="spacingAndGlyphs">-1</text>
<text x="616.80" y="155.25" font-size="8.8" fill="#e6e6e6" text-anchor="end">0</text>
<text x="616.80" y="132.34" font-size="8.8" fill="#e6e6e6" text-anchor="end">1</text>
<text x="616.80" y="109.42" font-size="8.8" fill="#e6e6e6" text-anchor="end">2</text>
<text x="616.80" y="86.51" font-size="8.8" fill="#e6e6e6" text-anchor="end">3</text>
<path d="M617.3 60.00H619.8" stroke="#8a8a8a" stroke-width="1.1"/>
<text x="616.80" y="63.60" font-size="8.8" fill="#e6e6e6" text-anchor="end">4</text>
<path d="M619.8 243.3V246.8M698.7 243.3V246.8" stroke="#8a8a8a" stroke-width="1.1"/>
<text x="659.40" y="252.00" font-size="8.8" fill="#e6e6e6" text-anchor="middle" textLength="13.65" lengthAdjust="spacingAndGlyphs">100</text>
<rect x="627.6" y="98.95" width="19.8" height="52.70" fill="url(#barR)" stroke="#300" stroke-width="0.6"/>
<rect x="648.4" y="151.65" width="19.8" height="18.33" fill="url(#barG)" stroke="#020" stroke-width="0.6"/>
<rect x="669.2" y="128.74" width="19.8" height="22.91" fill="url(#barB)" stroke="#003" stroke-width="0.6"/>
<text x="837.50" y="56.60" font-size="8.2" fill="#e6e6e6" text-anchor="middle" textLength="61.50" lengthAdjust="spacingAndGlyphs">Gamma Log/Log</text>
<rect x="732.20" y="59.80" width="225.20" height="179.80" fill="#222222" />
<path d="M729.7 203.64H957.4" stroke="#8a8a8a" stroke-width="1.1"/>
<path d="M729.7 167.68H957.4" stroke="#8a8a8a" stroke-width="1.1"/>
<path d="M729.7 131.72H957.4" stroke="#8a8a8a" stroke-width="1.1"/>
<path d="M729.7 95.76H957.4" stroke="#8a8a8a" stroke-width="1.1"/>
<rect x="732.2" y="59.8" width="225.20" height="179.80" fill="none" stroke="#8a8a8a" stroke-width="1.3"/>
<path d="M729.7 239.60H732.2" stroke="#8a8a8a" stroke-width="1.1"/>
<text x="729.20" y="243.20" font-size="8.8" fill="#e6e6e6" text-anchor="end" textLength="11.05" lengthAdjust="spacingAndGlyphs">1,8</text>
<text x="729.20" y="207.24" font-size="8.8" fill="#e6e6e6" text-anchor="end">2</text>
<text x="729.20" y="171.28" font-size="8.8" fill="#e6e6e6" text-anchor="end" textLength="11.05" lengthAdjust="spacingAndGlyphs">2,2</text>
<text x="729.20" y="135.32" font-size="8.8" fill="#e6e6e6" text-anchor="end" textLength="11.05" lengthAdjust="spacingAndGlyphs">2,4</text>
<text x="729.20" y="99.36" font-size="8.8" fill="#e6e6e6" text-anchor="end" textLength="11.05" lengthAdjust="spacingAndGlyphs">2,6</text>
<path d="M729.7 59.80H732.2" stroke="#8a8a8a" stroke-width="1.1"/>
<text x="729.20" y="63.40" font-size="8.8" fill="#e6e6e6" text-anchor="end" textLength="11.05" lengthAdjust="spacingAndGlyphs">2,8</text>
<path d="M732.20 239.6V242.6" stroke="#8a8a8a" stroke-width="1.1"/>
<text x="732.20" y="252.00" font-size="8.8" fill="#e6e6e6" text-anchor="middle">0</text>
<path d="M777.24 239.6V242.6" stroke="#8a8a8a" stroke-width="1.1"/>
<text x="777.24" y="252.00" font-size="8.8" fill="#e6e6e6" text-anchor="middle" textLength="9.10" lengthAdjust="spacingAndGlyphs">20</text>
<path d="M822.28 239.6V242.6" stroke="#8a8a8a" stroke-width="1.1"/>
<text x="822.28" y="252.00" font-size="8.8" fill="#e6e6e6" text-anchor="middle" textLength="9.10" lengthAdjust="spacingAndGlyphs">40</text>
<path d="M867.32 239.6V242.6" stroke="#8a8a8a" stroke-width="1.1"/>
<text x="867.32" y="252.00" font-size="8.8" fill="#e6e6e6" text-anchor="middle" textLength="9.10" lengthAdjust="spacingAndGlyphs">60</text>
<path d="M912.36 239.6V242.6" stroke="#8a8a8a" stroke-width="1.1"/>
<text x="912.36" y="252.00" font-size="8.8" fill="#e6e6e6" text-anchor="middle" textLength="9.10" lengthAdjust="spacingAndGlyphs">80</text>
<path d="M957.40 239.6V242.6" stroke="#8a8a8a" stroke-width="1.1"/>
<text x="957.40" y="252.00" font-size="8.8" fill="#e6e6e6" text-anchor="middle" textLength="13.65" lengthAdjust="spacingAndGlyphs">100</text>
<clipPath id="gclip"><rect x="732.2" y="59.8" width="225.20" height="179.80"/></clipPath>
<polyline points="732.20,451.73 743.46,275.61 754.72,258.19 765.98,252.35 777.24,242.01 788.50,223.92 799.76,219.89 811.02,190.51 822.28,180.18 833.54,168.65 844.80,180.66 856.06,198.08 867.32,184.80 878.58,171.10 889.84,179.73 901.10,165.52 912.36,136.39 923.62,146.10 934.88,75.98 946.14,59.80 957.40,169.48" fill="none" stroke="#8e8e8e" stroke-width="1.5" stroke-linejoin="round" clip-path="url(#gclip)"/>
<polyline points="752.47,247.69 756.97,239.60 761.48,232.77 765.98,225.94 771.61,219.46 777.24,214.43 782.87,210.11 788.50,206.52 794.13,203.28 799.76,200.58 811.02,195.73 822.28,191.59 833.54,188.36 844.80,185.66 856.06,183.14 867.32,180.81 878.58,179.01 889.84,177.21 901.10,175.77 912.36,174.33 923.62,173.25 934.88,172.18 946.14,171.28 957.40,170.56" fill="none" stroke="#f0ee20" stroke-width="1.9" stroke-linejoin="round" clip-path="url(#gclip)"/>
<text x="83.90" y="275.30" font-size="16" fill="#f2f2f2" textLength="107.20" lengthAdjust="spacingAndGlyphs">Avg dE2000: 2</text>
<text x="309.80" y="275.30" font-size="16" fill="#f2f2f2" textLength="106.70" lengthAdjust="spacingAndGlyphs">Avg CCT: 6391</text>
<text x="526.70" y="275.30" font-size="16" fill="#f2f2f2" textLength="146.70" lengthAdjust="spacingAndGlyphs">Contrast Ratio: 303</text>
<text x="748.40" y="275.30" font-size="16" fill="#f2f2f2" textLength="178.50" lengthAdjust="spacingAndGlyphs">Average Gamma: 2,104</text>
<rect x="27.50" y="286.80" width="945.00" height="74.00" fill="#000000" />
<rect x="91.00" y="290.2" width="36" height="29" fill="rgb(14,14,14)"/>
<rect x="91.00" y="319" width="36" height="29.2" fill="rgb(16,16,16)"/>
<rect x="91.50" y="290.6" width="35.0" height="57.2" rx="0.6" fill="none" stroke="rgb(196,196,196)" stroke-width="1.15"/>
<text x="109.00" y="356.50" font-size="7.2" fill="#f4f4f4" text-anchor="middle" font-weight="bold">0</text>
<rect x="132.74" y="290.2" width="36" height="29" fill="rgb(31,31,31)"/>
<rect x="132.74" y="319" width="36" height="29.2" fill="rgb(26,26,26)"/>
<rect x="133.24" y="290.6" width="35.0" height="57.2" rx="0.6" fill="none" stroke="rgb(196,196,196)" stroke-width="1.15"/>
<text x="150.74" y="356.50" font-size="7.2" fill="#f4f4f4" text-anchor="middle" font-weight="bold">5</text>
<rect x="174.48" y="290.2" width="36" height="29" fill="rgb(44,44,44)"/>
<rect x="174.48" y="319" width="36" height="29.2" fill="rgb(39,39,39)"/>
<rect x="174.98" y="290.6" width="35.0" height="57.2" rx="0.6" fill="none" stroke="rgb(196,196,196)" stroke-width="1.15"/>
<text x="192.48" y="356.50" font-size="7.2" fill="#f4f4f4" text-anchor="middle" font-weight="bold">10</text>
<rect x="216.22" y="290.2" width="36" height="29" fill="rgb(57,57,57)"/>
<rect x="216.22" y="319" width="36" height="29.2" fill="rgb(52,52,52)"/>
<rect x="216.72" y="290.6" width="35.0" height="57.2" rx="0.6" fill="none" stroke="rgb(196,196,196)" stroke-width="1.15"/>
<text x="234.22" y="356.50" font-size="7.2" fill="#f4f4f4" text-anchor="middle" font-weight="bold">15</text>
<rect x="257.96" y="290.2" width="36" height="29" fill="rgb(69,69,69)"/>
<rect x="257.96" y="319" width="36" height="29.2" fill="rgb(64,64,64)"/>
<rect x="258.46" y="290.6" width="35.0" height="57.2" rx="0.6" fill="none" stroke="rgb(196,196,196)" stroke-width="1.15"/>
<text x="275.96" y="356.50" font-size="7.2" fill="#f4f4f4" text-anchor="middle" font-weight="bold">20</text>
<rect x="299.70" y="290.2" width="36" height="29" fill="rgb(82,82,82)"/>
<rect x="299.70" y="319" width="36" height="29.2" fill="rgb(77,77,77)"/>
<rect x="300.20" y="290.6" width="35.0" height="57.2" rx="0.6" fill="none" stroke="rgb(196,196,196)" stroke-width="1.15"/>
<text x="317.70" y="356.50" font-size="7.2" fill="#f4f4f4" text-anchor="middle" font-weight="bold">25</text>
<rect x="341.44" y="290.2" width="36" height="29" fill="rgb(94,94,94)"/>
<rect x="341.44" y="319" width="36" height="29.2" fill="rgb(89,89,89)"/>
<rect x="341.94" y="290.6" width="35.0" height="57.2" rx="0.6" fill="none" stroke="rgb(196,196,196)" stroke-width="1.15"/>
<text x="359.44" y="356.50" font-size="7.2" fill="#f4f4f4" text-anchor="middle" font-weight="bold">30</text>
<rect x="383.18" y="290.2" width="36" height="29" fill="rgb(106,106,106)"/>
<rect x="383.18" y="319" width="36" height="29.2" fill="rgb(101,101,101)"/>
<rect x="383.68" y="290.6" width="35.0" height="57.2" rx="0.6" fill="none" stroke="rgb(196,196,196)" stroke-width="1.15"/>
<text x="401.18" y="356.50" font-size="7.2" fill="#f4f4f4" text-anchor="middle" font-weight="bold">35</text>
<rect x="424.92" y="290.2" width="36" height="29" fill="rgb(118,118,118)"/>
<rect x="424.92" y="319" width="36" height="29.2" fill="rgb(113,113,113)"/>
<rect x="425.42" y="290.6" width="35.0" height="57.2" rx="0.6" fill="none" stroke="rgb(196,196,196)" stroke-width="1.15"/>
<text x="442.92" y="356.50" font-size="7.2" fill="#f4f4f4" text-anchor="middle" font-weight="bold">40</text>
<rect x="466.66" y="290.2" width="36" height="29" fill="rgb(130,130,130)"/>
<rect x="466.66" y="319" width="36" height="29.2" fill="rgb(125,125,125)"/>
<rect x="467.16" y="290.6" width="35.0" height="57.2" rx="0.6" fill="none" stroke="rgb(196,196,196)" stroke-width="1.15"/>
<text x="484.66" y="356.50" font-size="7.2" fill="#f4f4f4" text-anchor="middle" font-weight="bold">45</text>
<rect x="508.40" y="290.2" width="36" height="29" fill="rgb(137,137,137)"/>
<rect x="508.40" y="319" width="36" height="29.2" fill="rgb(141,141,141)"/>
<rect x="508.90" y="290.6" width="35.0" height="57.2" rx="0.6" fill="none" stroke="rgb(196,196,196)" stroke-width="1.15"/>
<text x="526.40" y="356.50" font-size="7.2" fill="#f4f4f4" text-anchor="middle" font-weight="bold">50</text>
<rect x="550.14" y="290.2" width="36" height="29" fill="rgb(149,149,149)"/>
<rect x="550.14" y="319" width="36" height="29.2" fill="rgb(153,153,153)"/>
<rect x="550.64" y="290.6" width="35.0" height="57.2" rx="0.6" fill="none" stroke="rgb(196,196,196)" stroke-width="1.15"/>
<text x="568.14" y="356.50" font-size="7.2" fill="#f4f4f4" text-anchor="middle" font-weight="bold">55</text>
<rect x="591.88" y="290.2" width="36" height="29" fill="rgb(160,160,160)"/>
<rect x="591.88" y="319" width="36" height="29.2" fill="rgb(164,164,164)"/>
<rect x="592.38" y="290.6" width="35.0" height="57.2" rx="0.6" fill="none" stroke="rgb(196,196,196)" stroke-width="1.15"/>
<text x="609.88" y="356.50" font-size="7.2" fill="#f4f4f4" text-anchor="middle" font-weight="bold">60</text>
<rect x="633.62" y="290.2" width="36" height="29" fill="rgb(172,172,172)"/>
<rect x="633.62" y="319" width="36" height="29.2" fill="rgb(176,176,176)"/>
<rect x="634.12" y="290.6" width="35.0" height="57.2" rx="0.6" fill="none" stroke="rgb(204,204,204)" stroke-width="1.15"/>
<text x="651.62" y="356.50" font-size="7.2" fill="#f4f4f4" text-anchor="middle" font-weight="bold">65</text>
<rect x="675.36" y="290.2" width="36" height="29" fill="rgb(184,184,184)"/>
<rect x="675.36" y="319" width="36" height="29.2" fill="rgb(188,188,188)"/>
<rect x="675.86" y="290.6" width="35.0" height="57.2" rx="0.6" fill="none" stroke="rgb(216,216,216)" stroke-width="1.15"/>
<text x="693.36" y="356.50" font-size="7.2" fill="#f4f4f4" text-anchor="middle" font-weight="bold">70</text>
<rect x="717.10" y="290.2" width="36" height="29" fill="rgb(195,195,195)"/>
<rect x="717.10" y="319" width="36" height="29.2" fill="rgb(199,199,199)"/>
<rect x="717.60" y="290.6" width="35.0" height="57.2" rx="0.6" fill="none" stroke="rgb(227,227,227)" stroke-width="1.15"/>
<text x="735.10" y="356.50" font-size="7.2" fill="#f4f4f4" text-anchor="middle" font-weight="bold">75</text>
<rect x="758.84" y="290.2" width="36" height="29" fill="rgb(207,207,207)"/>
<rect x="758.84" y="319" width="36" height="29.2" fill="rgb(211,211,211)"/>
<rect x="759.34" y="290.6" width="35.0" height="57.2" rx="0.6" fill="none" stroke="rgb(239,239,239)" stroke-width="1.15"/>
<text x="776.84" y="356.50" font-size="7.2" fill="#f4f4f4" text-anchor="middle" font-weight="bold">80</text>
<rect x="800.58" y="290.2" width="36" height="29" fill="rgb(219,219,219)"/>
<rect x="800.58" y="319" width="36" height="29.2" fill="rgb(223,223,223)"/>
<rect x="801.08" y="290.6" width="35.0" height="57.2" rx="0.6" fill="none" stroke="rgb(251,251,251)" stroke-width="1.15"/>
<text x="818.58" y="356.50" font-size="7.2" fill="#f4f4f4" text-anchor="middle" font-weight="bold">85</text>
<rect x="842.32" y="290.2" width="36" height="29" fill="rgb(230,230,230)"/>
<rect x="842.32" y="319" width="36" height="29.2" fill="rgb(234,234,234)"/>
<rect x="842.82" y="290.6" width="35.0" height="57.2" rx="0.6" fill="none" stroke="rgb(255,255,255)" stroke-width="1.15"/>
<text x="860.32" y="356.50" font-size="7.2" fill="#f4f4f4" text-anchor="middle" font-weight="bold">90</text>
<rect x="884.06" y="290.2" width="36" height="29" fill="rgb(242,242,242)"/>
<rect x="884.06" y="319" width="36" height="29.2" fill="rgb(246,246,246)"/>
<rect x="884.56" y="290.6" width="35.0" height="57.2" rx="0.6" fill="none" stroke="rgb(255,255,255)" stroke-width="1.15"/>
<text x="902.06" y="356.50" font-size="7.2" fill="#f4f4f4" text-anchor="middle" font-weight="bold">95</text>
<rect x="925.80" y="290.2" width="36" height="29" fill="rgb(253,253,253)"/>
<rect x="925.80" y="319" width="36" height="29.2" fill="rgb(255,255,255)"/>
<rect x="926.30" y="290.6" width="35.0" height="57.2" rx="0.6" fill="none" stroke="rgb(255,255,255)" stroke-width="1.15"/>
<text x="943.80" y="356.50" font-size="7.2" fill="#f4f4f4" text-anchor="middle" font-weight="bold">100</text>
<text transform="translate(89.0,312.9) rotate(-90)" font-size="7.3" fill="#f4f4f4" font-weight="bold" textLength="20.4" lengthAdjust="spacingAndGlyphs">Actual</text>
<text transform="translate(89.0,345.1) rotate(-90)" font-size="7.3" fill="#f4f4f4" font-weight="bold" textLength="19.6" lengthAdjust="spacingAndGlyphs">Target</text>
<text x="39.10" y="398.70" font-size="16" fill="#f2f2f2" textLength="124.00" lengthAdjust="spacingAndGlyphs">Current Reading</text>
<text x="39.10" y="423.50" font-size="14.6" fill="#f2f2f2" textLength="58.20" lengthAdjust="spacingAndGlyphs">x: 0,3136</text>
<text x="124.30" y="423.50" font-size="14.6" fill="#f2f2f2" textLength="57.80" lengthAdjust="spacingAndGlyphs">y: 0,3274</text>
<text x="39.10" y="442.90" font-size="14.6" fill="#f2f2f2" textLength="54.60" lengthAdjust="spacingAndGlyphs">u': 0,199</text>
<text x="124.30" y="442.90" font-size="14.6" fill="#f2f2f2" textLength="61.80" lengthAdjust="spacingAndGlyphs">v': 0,4676</text>
<text x="39.10" y="462.00" font-size="14.6" fill="#f2f2f2" textLength="106.20" lengthAdjust="spacingAndGlyphs">cd/m²: 288,0829</text>
<text x="39.10" y="480.90" font-size="14.6" fill="#f2f2f2" textLength="87.60" lengthAdjust="spacingAndGlyphs">ΔE 2000: 1,88</text>
<text x="295.20" y="379.90" font-size="8.2" fill="#e6e6e6" text-anchor="middle" textLength="42.50" lengthAdjust="spacingAndGlyphs">CIE 1931 xy</text>
<defs>
<clipPath id="cclip"><rect x="233.2" y="382.7" width="143.10" height="93.60"/></clipPath>
</defs>
<path d="M240.1 476.3V479.3" stroke="#e0e0e0" stroke-width="1.1"/>
<text x="240.10" y="489.20" font-size="8.8" fill="#e6e6e6" text-anchor="middle" textLength="15.60" lengthAdjust="spacingAndGlyphs">0,29</text>
<path d="M268.6 476.3V479.3" stroke="#e0e0e0" stroke-width="1.1"/>
<text x="268.60" y="489.20" font-size="8.8" fill="#e6e6e6" text-anchor="middle" textLength="11.05" lengthAdjust="spacingAndGlyphs">0,3</text>
<path d="M297.1 476.3V479.3" stroke="#e0e0e0" stroke-width="1.1"/>
<text x="297.10" y="489.20" font-size="8.8" fill="#e6e6e6" text-anchor="middle" textLength="15.60" lengthAdjust="spacingAndGlyphs">0,31</text>
<path d="M325.6 476.3V479.3" stroke="#e0e0e0" stroke-width="1.1"/>
<text x="325.60" y="489.20" font-size="8.8" fill="#e6e6e6" text-anchor="middle" textLength="15.60" lengthAdjust="spacingAndGlyphs">0,32</text>
<path d="M354.1 476.3V479.3" stroke="#e0e0e0" stroke-width="1.1"/>
<text x="354.10" y="489.20" font-size="8.8" fill="#e6e6e6" text-anchor="middle" textLength="15.60" lengthAdjust="spacingAndGlyphs">0,33</text>
<path d="M230.2 410.0H233.2" stroke="#e0e0e0" stroke-width="1.1"/>
<text x="229.60" y="412.50" font-size="8.8" fill="#e6e6e6" text-anchor="end" textLength="15.60" lengthAdjust="spacingAndGlyphs">0,34</text>
<path d="M230.2 447.7H233.2" stroke="#e0e0e0" stroke-width="1.1"/>
<text x="229.60" y="450.20" font-size="8.8" fill="#e6e6e6" text-anchor="end" textLength="15.60" lengthAdjust="spacingAndGlyphs">0,32</text>
<path d="M252.1 476.3Q314.2 434.6 376.3 397.0" stroke="#000" stroke-width="1.7" fill="none" clip-path="url(#cclip)"/>
<circle cx="284.7" cy="451.5" r="2.5" fill="#000"/>
<circle cx="314.0" cy="428.8" r="2.7" fill="#050505"/>
<circle cx="313.2" cy="431.0" r="2.6" fill="#050505"/>
<circle cx="311.8" cy="432.4" r="2.6" fill="#050505"/>
<circle cx="310.4" cy="434.2" r="2.4" fill="#050505"/>
<circle cx="309.0" cy="436.0" r="2.2" fill="#050505"/>
<rect x="300.8" y="425.6" width="7.6" height="7.0" fill="#fff" fill-opacity="0.85" stroke="#000" stroke-width="0.9"/>
<circle cx="307.4" cy="432.3" r="1.7" fill="#fff"/>
<rect x="383.20" y="365.80" width="584.70" height="120.20" fill="#141414" />
<rect x="383.20" y="365.80" width="5.80" height="16.00" fill="#000000" />
<rect x="388.80" y="365.80" width="579.10" height="15.40" fill="url(#thead)" />
<clipPath id="tclip"><rect x="383.2" y="365" width="584.70" height="122"/></clipPath>
<g clip-path="url(#tclip)">
<text x="449.60" y="376.80" font-size="8.4" fill="#f8f8f8" textLength="4.00" lengthAdjust="spacingAndGlyphs">0</text>
<text x="487.52" y="376.80" font-size="8.4" fill="#f8f8f8" textLength="4.00" lengthAdjust="spacingAndGlyphs">5</text>
<text x="525.44" y="376.80" font-size="8.4" fill="#f8f8f8" textLength="8.00" lengthAdjust="spacingAndGlyphs">10</text>
<text x="563.36" y="376.80" font-size="8.4" fill="#f8f8f8" textLength="8.00" lengthAdjust="spacingAndGlyphs">15</text>
<text x="601.28" y="376.80" font-size="8.4" fill="#f8f8f8" textLength="8.00" lengthAdjust="spacingAndGlyphs">20</text>
<text x="639.20" y="376.80" font-size="8.4" fill="#f8f8f8" textLength="8.00" lengthAdjust="spacingAndGlyphs">25</text>
<text x="677.12" y="376.80" font-size="8.4" fill="#f8f8f8" textLength="8.00" lengthAdjust="spacingAndGlyphs">30</text>
<text x="715.04" y="376.80" font-size="8.4" fill="#f8f8f8" textLength="8.00" lengthAdjust="spacingAndGlyphs">35</text>
<text x="752.96" y="376.80" font-size="8.4" fill="#f8f8f8" textLength="8.00" lengthAdjust="spacingAndGlyphs">40</text>
<text x="790.88" y="376.80" font-size="8.4" fill="#f8f8f8" textLength="8.00" lengthAdjust="spacingAndGlyphs">45</text>
<text x="828.80" y="376.80" font-size="8.4" fill="#f8f8f8" textLength="8.00" lengthAdjust="spacingAndGlyphs">50</text>
<text x="866.72" y="376.80" font-size="8.4" fill="#f8f8f8" textLength="8.00" lengthAdjust="spacingAndGlyphs">55</text>
<text x="904.64" y="376.80" font-size="8.4" fill="#f8f8f8" textLength="8.00" lengthAdjust="spacingAndGlyphs">60</text>
<text x="942.56" y="376.80" font-size="8.4" fill="#f8f8f8" textLength="8.00" lengthAdjust="spacingAndGlyphs">65</text>
<rect x="388.80" y="381.20" width="579.10" height="13.16" fill="#424242" />
<text x="390.60" y="390.80" font-size="8.4" fill="#f8f8f8" textLength="25.60" lengthAdjust="spacingAndGlyphs">x: CIE31</text>
<text x="449.60" y="390.80" font-size="8.4" fill="#f8f8f8" textLength="21.50" lengthAdjust="spacingAndGlyphs">0,3058</text>
<text x="487.52" y="390.80" font-size="8.4" fill="#f8f8f8" textLength="21.50" lengthAdjust="spacingAndGlyphs">0,3141</text>
<text x="525.44" y="390.80" font-size="8.4" fill="#f8f8f8" textLength="21.50" lengthAdjust="spacingAndGlyphs">0,3152</text>
<text x="563.36" y="390.80" font-size="8.4" fill="#f8f8f8" textLength="21.50" lengthAdjust="spacingAndGlyphs">0,3156</text>
<text x="601.28" y="390.80" font-size="8.4" fill="#f8f8f8" textLength="21.50" lengthAdjust="spacingAndGlyphs">0,3157</text>
<text x="639.20" y="390.80" font-size="8.4" fill="#f8f8f8" textLength="21.50" lengthAdjust="spacingAndGlyphs">0,3159</text>
<text x="677.12" y="390.80" font-size="8.4" fill="#f8f8f8" textLength="21.50" lengthAdjust="spacingAndGlyphs">0,3158</text>
<text x="715.04" y="390.80" font-size="8.4" fill="#f8f8f8" textLength="21.50" lengthAdjust="spacingAndGlyphs">0,3160</text>
<text x="752.96" y="390.80" font-size="8.4" fill="#f8f8f8" textLength="21.50" lengthAdjust="spacingAndGlyphs">0,3158</text>
<text x="790.88" y="390.80" font-size="8.4" fill="#f8f8f8" textLength="21.50" lengthAdjust="spacingAndGlyphs">0,3157</text>
<text x="828.80" y="390.80" font-size="8.4" fill="#f8f8f8" textLength="21.50" lengthAdjust="spacingAndGlyphs">0,3154</text>
<text x="866.72" y="390.80" font-size="8.4" fill="#f8f8f8" textLength="21.50" lengthAdjust="spacingAndGlyphs">0,3151</text>
<text x="904.64" y="390.80" font-size="8.4" fill="#f8f8f8" textLength="21.50" lengthAdjust="spacingAndGlyphs">0,3150</text>
<text x="942.56" y="390.80" font-size="8.4" fill="#f8f8f8" textLength="21.50" lengthAdjust="spacingAndGlyphs">0,3148</text>
<rect x="388.80" y="394.31" width="579.10" height="13.16" fill="#808080" />
<text x="390.60" y="403.91" font-size="8.4" fill="#f8f8f8" textLength="25.60" lengthAdjust="spacingAndGlyphs">y: CIE31</text>
<text x="449.60" y="403.91" font-size="8.4" fill="#f8f8f8" textLength="21.50" lengthAdjust="spacingAndGlyphs">0,3170</text>
<text x="487.52" y="403.91" font-size="8.4" fill="#f8f8f8" textLength="21.50" lengthAdjust="spacingAndGlyphs">0,3255</text>
<text x="525.44" y="403.91" font-size="8.4" fill="#f8f8f8" textLength="21.50" lengthAdjust="spacingAndGlyphs">0,3284</text>
<text x="563.36" y="403.91" font-size="8.4" fill="#f8f8f8" textLength="21.50" lengthAdjust="spacingAndGlyphs">0,3290</text>
<text x="601.28" y="403.91" font-size="8.4" fill="#f8f8f8" textLength="21.50" lengthAdjust="spacingAndGlyphs">0,3294</text>
<text x="639.20" y="403.91" font-size="8.4" fill="#f8f8f8" textLength="21.50" lengthAdjust="spacingAndGlyphs">0,3293</text>
<text x="677.12" y="403.91" font-size="8.4" fill="#f8f8f8" textLength="21.50" lengthAdjust="spacingAndGlyphs">0,3290</text>
<text x="715.04" y="403.91" font-size="8.4" fill="#f8f8f8" textLength="21.50" lengthAdjust="spacingAndGlyphs">0,3285</text>
<text x="752.96" y="403.91" font-size="8.4" fill="#f8f8f8" textLength="21.50" lengthAdjust="spacingAndGlyphs">0,3282</text>
<text x="790.88" y="403.91" font-size="8.4" fill="#f8f8f8" textLength="21.50" lengthAdjust="spacingAndGlyphs">0,3279</text>
<text x="828.80" y="403.91" font-size="8.4" fill="#f8f8f8" textLength="21.50" lengthAdjust="spacingAndGlyphs">0,3276</text>
<text x="866.72" y="403.91" font-size="8.4" fill="#f8f8f8" textLength="21.50" lengthAdjust="spacingAndGlyphs">0,3275</text>
<text x="904.64" y="403.91" font-size="8.4" fill="#f8f8f8" textLength="21.50" lengthAdjust="spacingAndGlyphs">0,3274</text>
<text x="942.56" y="403.91" font-size="8.4" fill="#f8f8f8" textLength="21.50" lengthAdjust="spacingAndGlyphs">0,3273</text>
<rect x="388.80" y="407.42" width="579.10" height="13.16" fill="#424242" />
<text x="390.60" y="417.02" font-size="8.4" fill="#f8f8f8" textLength="4.40" lengthAdjust="spacingAndGlyphs">Y</text>
<text x="449.60" y="417.02" font-size="8.4" fill="#f8f8f8" textLength="21.50" lengthAdjust="spacingAndGlyphs">0,9503</text>
<text x="487.52" y="417.02" font-size="8.4" fill="#f8f8f8" textLength="21.50" lengthAdjust="spacingAndGlyphs">2,4064</text>
<text x="525.44" y="417.02" font-size="8.4" fill="#f8f8f8" textLength="21.50" lengthAdjust="spacingAndGlyphs">5,8385</text>
<text x="563.36" y="417.02" font-size="8.4" fill="#f8f8f8" textLength="25.50" lengthAdjust="spacingAndGlyphs">10,9234</text>
<text x="601.28" y="417.02" font-size="8.4" fill="#f8f8f8" textLength="25.50" lengthAdjust="spacingAndGlyphs">16,3778</text>
<text x="639.20" y="417.02" font-size="8.4" fill="#f8f8f8" textLength="25.50" lengthAdjust="spacingAndGlyphs">21,2331</text>
<text x="677.12" y="417.02" font-size="8.4" fill="#f8f8f8" textLength="25.50" lengthAdjust="spacingAndGlyphs">29,1599</text>
<text x="715.04" y="417.02" font-size="8.4" fill="#f8f8f8" textLength="25.50" lengthAdjust="spacingAndGlyphs">32,9954</text>
<text x="752.96" y="417.02" font-size="8.4" fill="#f8f8f8" textLength="25.50" lengthAdjust="spacingAndGlyphs">41,2987</text>
<text x="790.88" y="417.02" font-size="8.4" fill="#f8f8f8" textLength="25.50" lengthAdjust="spacingAndGlyphs">50,4429</text>
<text x="828.80" y="417.02" font-size="8.4" fill="#f8f8f8" textLength="25.50" lengthAdjust="spacingAndGlyphs">66,5571</text>
<text x="866.72" y="417.02" font-size="8.4" fill="#f8f8f8" textLength="25.50" lengthAdjust="spacingAndGlyphs">84,9017</text>
<text x="904.64" y="417.02" font-size="8.4" fill="#f8f8f8" textLength="25.50" lengthAdjust="spacingAndGlyphs">97,6732</text>
<text x="942.56" y="417.02" font-size="8.4" fill="#f8f8f8" textLength="29.50" lengthAdjust="spacingAndGlyphs">111,9812</text>
<rect x="388.80" y="420.53" width="579.10" height="13.16" fill="#808080" />
<text x="390.60" y="430.13" font-size="8.4" fill="#f8f8f8" textLength="28.00" lengthAdjust="spacingAndGlyphs">Target Y</text>
<text x="449.60" y="430.13" font-size="8.4" fill="#f8f8f8" textLength="21.50" lengthAdjust="spacingAndGlyphs">0,9503</text>
<text x="487.52" y="430.13" font-size="8.4" fill="#f8f8f8" textLength="21.50" lengthAdjust="spacingAndGlyphs">2,4865</text>
<text x="525.44" y="430.13" font-size="8.4" fill="#f8f8f8" textLength="21.50" lengthAdjust="spacingAndGlyphs">4,9316</text>
<text x="563.36" y="430.13" font-size="8.4" fill="#f8f8f8" textLength="21.50" lengthAdjust="spacingAndGlyphs">8,3966</text>
<text x="601.28" y="430.13" font-size="8.4" fill="#f8f8f8" textLength="25.50" lengthAdjust="spacingAndGlyphs">12,9764</text>
<text x="639.20" y="430.13" font-size="8.4" fill="#f8f8f8" textLength="25.50" lengthAdjust="spacingAndGlyphs">18,7553</text>
<text x="677.12" y="430.13" font-size="8.4" fill="#f8f8f8" textLength="25.50" lengthAdjust="spacingAndGlyphs">25,8095</text>
<text x="715.04" y="430.13" font-size="8.4" fill="#f8f8f8" textLength="25.50" lengthAdjust="spacingAndGlyphs">34,2086</text>
<text x="752.96" y="430.13" font-size="8.4" fill="#f8f8f8" textLength="25.50" lengthAdjust="spacingAndGlyphs">44,0175</text>
<text x="790.88" y="430.13" font-size="8.4" fill="#f8f8f8" textLength="25.50" lengthAdjust="spacingAndGlyphs">55,2967</text>
<text x="828.80" y="430.13" font-size="8.4" fill="#f8f8f8" textLength="25.50" lengthAdjust="spacingAndGlyphs">68,1033</text>
<text x="866.72" y="430.13" font-size="8.4" fill="#f8f8f8" textLength="25.50" lengthAdjust="spacingAndGlyphs">81,1165</text>
<text x="904.64" y="430.13" font-size="8.4" fill="#f8f8f8" textLength="25.50" lengthAdjust="spacingAndGlyphs">96,9866</text>
<text x="942.56" y="430.13" font-size="8.4" fill="#f8f8f8" textLength="29.50" lengthAdjust="spacingAndGlyphs">114,5340</text>
<rect x="388.80" y="433.64" width="579.10" height="13.16" fill="#424242" />
<text x="390.60" y="443.24" font-size="8.4" fill="#f8f8f8" textLength="55.00" lengthAdjust="spacingAndGlyphs">Gamma Log/Log</text>
<text x="449.60" y="443.24" font-size="8.4" fill="#f8f8f8" textLength="21.50" lengthAdjust="spacingAndGlyphs">0,6202</text>
<text x="487.52" y="443.24" font-size="8.4" fill="#f8f8f8" textLength="21.50" lengthAdjust="spacingAndGlyphs">1,5997</text>
<text x="525.44" y="443.24" font-size="8.4" fill="#f8f8f8" textLength="21.50" lengthAdjust="spacingAndGlyphs">1,6966</text>
<text x="563.36" y="443.24" font-size="8.4" fill="#f8f8f8" textLength="21.50" lengthAdjust="spacingAndGlyphs">1,7291</text>
<text x="601.28" y="443.24" font-size="8.4" fill="#f8f8f8" textLength="21.50" lengthAdjust="spacingAndGlyphs">1,7866</text>
<text x="639.20" y="443.24" font-size="8.4" fill="#f8f8f8" textLength="21.50" lengthAdjust="spacingAndGlyphs">1,8872</text>
<text x="677.12" y="443.24" font-size="8.4" fill="#f8f8f8" textLength="21.50" lengthAdjust="spacingAndGlyphs">1,9096</text>
<text x="715.04" y="443.24" font-size="8.4" fill="#f8f8f8" textLength="21.50" lengthAdjust="spacingAndGlyphs">2,0730</text>
<text x="752.96" y="443.24" font-size="8.4" fill="#f8f8f8" textLength="21.50" lengthAdjust="spacingAndGlyphs">2,1305</text>
<text x="790.88" y="443.24" font-size="8.4" fill="#f8f8f8" textLength="21.50" lengthAdjust="spacingAndGlyphs">2,1946</text>
<text x="828.80" y="443.24" font-size="8.4" fill="#f8f8f8" textLength="21.50" lengthAdjust="spacingAndGlyphs">2,1278</text>
<text x="866.72" y="443.24" font-size="8.4" fill="#f8f8f8" textLength="21.50" lengthAdjust="spacingAndGlyphs">2,0309</text>
<text x="904.64" y="443.24" font-size="8.4" fill="#f8f8f8" textLength="21.50" lengthAdjust="spacingAndGlyphs">2,1048</text>
<text x="942.56" y="443.24" font-size="8.4" fill="#f8f8f8" textLength="21.50" lengthAdjust="spacingAndGlyphs">2,1810</text>
<rect x="388.80" y="446.75" width="579.10" height="13.16" fill="#808080" />
<text x="390.60" y="456.35" font-size="8.4" fill="#f8f8f8" textLength="13.20" lengthAdjust="spacingAndGlyphs">CCT</text>
<text x="449.60" y="456.35" font-size="8.4" fill="#f8f8f8" textLength="33.50" lengthAdjust="spacingAndGlyphs">7029,0000</text>
<text x="487.52" y="456.35" font-size="8.4" fill="#f8f8f8" textLength="33.50" lengthAdjust="spacingAndGlyphs">6451,0000</text>
<text x="525.44" y="456.35" font-size="8.4" fill="#f8f8f8" textLength="33.50" lengthAdjust="spacingAndGlyphs">6373,0000</text>
<text x="563.36" y="456.35" font-size="8.4" fill="#f8f8f8" textLength="33.50" lengthAdjust="spacingAndGlyphs">6346,0000</text>
<text x="601.28" y="456.35" font-size="8.4" fill="#f8f8f8" textLength="33.50" lengthAdjust="spacingAndGlyphs">6340,0000</text>
<text x="639.20" y="456.35" font-size="8.4" fill="#f8f8f8" textLength="33.50" lengthAdjust="spacingAndGlyphs">6328,0000</text>
<text x="677.12" y="456.35" font-size="8.4" fill="#f8f8f8" textLength="33.50" lengthAdjust="spacingAndGlyphs">6338,0000</text>
<text x="715.04" y="456.35" font-size="8.4" fill="#f8f8f8" textLength="33.50" lengthAdjust="spacingAndGlyphs">6329,0000</text>
<text x="752.96" y="456.35" font-size="8.4" fill="#f8f8f8" textLength="33.50" lengthAdjust="spacingAndGlyphs">6340,0000</text>
<text x="790.88" y="456.35" font-size="8.4" fill="#f8f8f8" textLength="33.50" lengthAdjust="spacingAndGlyphs">6350,0000</text>
<text x="828.80" y="456.35" font-size="8.4" fill="#f8f8f8" textLength="33.50" lengthAdjust="spacingAndGlyphs">6368,0000</text>
<text x="866.72" y="456.35" font-size="8.4" fill="#f8f8f8" textLength="33.50" lengthAdjust="spacingAndGlyphs">6382,0000</text>
<text x="904.64" y="456.35" font-size="8.4" fill="#f8f8f8" textLength="33.50" lengthAdjust="spacingAndGlyphs">6391,0000</text>
<text x="942.56" y="456.35" font-size="8.4" fill="#f8f8f8" textLength="33.50" lengthAdjust="spacingAndGlyphs">6401,0000</text>
<rect x="388.80" y="459.86" width="579.10" height="13.16" fill="#424242" />
<text x="390.60" y="469.46" font-size="8.4" fill="#f8f8f8" textLength="27.20" lengthAdjust="spacingAndGlyphs">ΔE 2000</text>
<text x="449.60" y="469.46" font-size="8.4" fill="#f8f8f8" textLength="21.50" lengthAdjust="spacingAndGlyphs">0,5505</text>
<text x="487.52" y="469.46" font-size="8.4" fill="#f8f8f8" textLength="21.50" lengthAdjust="spacingAndGlyphs">0,7890</text>
<text x="525.44" y="469.46" font-size="8.4" fill="#f8f8f8" textLength="21.50" lengthAdjust="spacingAndGlyphs">1,3120</text>
<text x="563.36" y="469.46" font-size="8.4" fill="#f8f8f8" textLength="21.50" lengthAdjust="spacingAndGlyphs">2,4246</text>
<text x="601.28" y="469.46" font-size="8.4" fill="#f8f8f8" textLength="21.50" lengthAdjust="spacingAndGlyphs">2,6196</text>
<text x="639.20" y="469.46" font-size="8.4" fill="#f8f8f8" textLength="21.50" lengthAdjust="spacingAndGlyphs">1,8448</text>
<text x="677.12" y="469.46" font-size="8.4" fill="#f8f8f8" textLength="21.50" lengthAdjust="spacingAndGlyphs">2,1537</text>
<text x="715.04" y="469.46" font-size="8.4" fill="#f8f8f8" textLength="21.50" lengthAdjust="spacingAndGlyphs">1,5370</text>
<text x="752.96" y="469.46" font-size="8.4" fill="#f8f8f8" textLength="21.50" lengthAdjust="spacingAndGlyphs">1,9887</text>
<text x="790.88" y="469.46" font-size="8.4" fill="#f8f8f8" textLength="21.50" lengthAdjust="spacingAndGlyphs">2,6706</text>
<text x="828.80" y="469.46" font-size="8.4" fill="#f8f8f8" textLength="21.50" lengthAdjust="spacingAndGlyphs">1,9647</text>
<text x="866.72" y="469.46" font-size="8.4" fill="#f8f8f8" textLength="21.50" lengthAdjust="spacingAndGlyphs">2,2264</text>
<text x="904.64" y="469.46" font-size="8.4" fill="#f8f8f8" textLength="21.50" lengthAdjust="spacingAndGlyphs">2,0491</text>
<text x="942.56" y="469.46" font-size="8.4" fill="#f8f8f8" textLength="21.50" lengthAdjust="spacingAndGlyphs">2,1511</text>
<rect x="388.80" y="472.97" width="579.10" height="13.16" fill="#808080" />
<text x="390.60" y="482.57" font-size="8.4" fill="#f8f8f8" textLength="19.20" lengthAdjust="spacingAndGlyphs">dEITP</text>
<text x="449.60" y="482.57" font-size="8.4" fill="#f8f8f8" textLength="21.50" lengthAdjust="spacingAndGlyphs">2,4887</text>
<text x="487.52" y="482.57" font-size="8.4" fill="#f8f8f8" textLength="21.50" lengthAdjust="spacingAndGlyphs">1,9585</text>
<text x="525.44" y="482.57" font-size="8.4" fill="#f8f8f8" textLength="21.50" lengthAdjust="spacingAndGlyphs">8,8253</text>
<text x="563.36" y="482.57" font-size="8.4" fill="#f8f8f8" textLength="25.50" lengthAdjust="spacingAndGlyphs">14,9483</text>
<text x="601.28" y="482.57" font-size="8.4" fill="#f8f8f8" textLength="25.50" lengthAdjust="spacingAndGlyphs">14,0318</text>
<text x="639.20" y="482.57" font-size="8.4" fill="#f8f8f8" textLength="21.50" lengthAdjust="spacingAndGlyphs">7,9446</text>
<text x="677.12" y="482.57" font-size="8.4" fill="#f8f8f8" textLength="21.50" lengthAdjust="spacingAndGlyphs">8,1161</text>
<text x="715.04" y="482.57" font-size="8.4" fill="#f8f8f8" textLength="21.50" lengthAdjust="spacingAndGlyphs">3,1079</text>
<text x="752.96" y="482.57" font-size="8.4" fill="#f8f8f8" textLength="21.50" lengthAdjust="spacingAndGlyphs">4,7231</text>
<text x="790.88" y="482.57" font-size="8.4" fill="#f8f8f8" textLength="21.50" lengthAdjust="spacingAndGlyphs">6,6087</text>
<text x="828.80" y="482.57" font-size="8.4" fill="#f8f8f8" textLength="21.50" lengthAdjust="spacingAndGlyphs">2,6019</text>
<text x="866.72" y="482.57" font-size="8.4" fill="#f8f8f8" textLength="21.50" lengthAdjust="spacingAndGlyphs">3,8911</text>
<text x="904.64" y="482.57" font-size="8.4" fill="#f8f8f8" textLength="21.50" lengthAdjust="spacingAndGlyphs">2,0629</text>
<text x="942.56" y="482.57" font-size="8.4" fill="#f8f8f8" textLength="21.50" lengthAdjust="spacingAndGlyphs">2,4794</text>
</g>
<rect x="389.00" y="486.80" width="578.90" height="6.60" fill="#444444" />
<rect x="389.20" y="487.00" width="7.20" height="6.20" fill="#7a7a7a" />
<path d="M394.2 488.2V492L391.6 490.1Z" fill="#222"/>
<rect x="396.80" y="487.20" width="381.80" height="5.80" fill="#5a5a5a" rx="2.6"/>
<rect x="961.40" y="487.00" width="6.40" height="6.20" fill="#7a7a7a" />
<path d="M963.4 488.2V492L966 490.1Z" fill="#222"/>
<rect x="1.30" y="496.8" width="37.9" height="33" rx="1.5" fill="url(#bb)" stroke="#929292" stroke-width="0.8"/>
<rect x="3.50" y="499.4" width="33.6" height="18.4" rx="1" fill="rgb(0,0,0)" stroke="#4a4a4a" stroke-width="0.7"/>
<text x="20.40" y="526.20" font-size="5.8" fill="#2a2a2a" text-anchor="middle">0</text>
<rect x="40.83" y="496.8" width="37.9" height="33" rx="1.5" fill="url(#bb)" stroke="#929292" stroke-width="0.8"/>
<rect x="43.03" y="499.4" width="33.6" height="18.4" rx="1" fill="rgb(13,13,13)" stroke="#4a4a4a" stroke-width="0.7"/>
<text x="59.93" y="526.20" font-size="5.8" fill="#2a2a2a" text-anchor="middle">5</text>
<rect x="80.36" y="496.8" width="37.9" height="33" rx="1.5" fill="url(#bb)" stroke="#929292" stroke-width="0.8"/>
<rect x="82.56" y="499.4" width="33.6" height="18.4" rx="1" fill="rgb(26,26,26)" stroke="#4a4a4a" stroke-width="0.7"/>
<text x="99.46" y="526.20" font-size="5.8" fill="#2a2a2a" text-anchor="middle">10</text>
<rect x="119.89" y="496.8" width="37.9" height="33" rx="1.5" fill="url(#bb)" stroke="#929292" stroke-width="0.8"/>
<rect x="122.09" y="499.4" width="33.6" height="18.4" rx="1" fill="rgb(38,38,38)" stroke="#4a4a4a" stroke-width="0.7"/>
<text x="138.99" y="526.20" font-size="5.8" fill="#2a2a2a" text-anchor="middle">15</text>
<rect x="159.42" y="496.8" width="37.9" height="33" rx="1.5" fill="url(#bb)" stroke="#929292" stroke-width="0.8"/>
<rect x="161.62" y="499.4" width="33.6" height="18.4" rx="1" fill="rgb(51,51,51)" stroke="#4a4a4a" stroke-width="0.7"/>
<text x="178.52" y="526.20" font-size="5.8" fill="#2a2a2a" text-anchor="middle">20</text>
<rect x="198.95" y="496.8" width="37.9" height="33" rx="1.5" fill="url(#bb)" stroke="#929292" stroke-width="0.8"/>
<rect x="201.15" y="499.4" width="33.6" height="18.4" rx="1" fill="rgb(64,64,64)" stroke="#4a4a4a" stroke-width="0.7"/>
<text x="218.05" y="526.20" font-size="5.8" fill="#2a2a2a" text-anchor="middle">25</text>
<rect x="238.48" y="496.8" width="37.9" height="33" rx="1.5" fill="url(#bb)" stroke="#929292" stroke-width="0.8"/>
<rect x="240.68" y="499.4" width="33.6" height="18.4" rx="1" fill="rgb(76,76,76)" stroke="#4a4a4a" stroke-width="0.7"/>
<text x="257.58" y="526.20" font-size="5.8" fill="#2a2a2a" text-anchor="middle">30</text>
<rect x="278.01" y="496.8" width="37.9" height="33" rx="1.5" fill="url(#bb)" stroke="#929292" stroke-width="0.8"/>
<rect x="280.21" y="499.4" width="33.6" height="18.4" rx="1" fill="rgb(89,89,89)" stroke="#4a4a4a" stroke-width="0.7"/>
<text x="297.11" y="526.20" font-size="5.8" fill="#2a2a2a" text-anchor="middle">35</text>
<rect x="317.54" y="496.8" width="37.9" height="33" rx="1.5" fill="url(#bb)" stroke="#929292" stroke-width="0.8"/>
<rect x="319.74" y="499.4" width="33.6" height="18.4" rx="1" fill="rgb(102,102,102)" stroke="#4a4a4a" stroke-width="0.7"/>
<text x="336.64" y="526.20" font-size="5.8" fill="#2a2a2a" text-anchor="middle">40</text>
<rect x="357.07" y="496.8" width="37.9" height="33" rx="1.5" fill="url(#bb)" stroke="#929292" stroke-width="0.8"/>
<rect x="359.27" y="499.4" width="33.6" height="18.4" rx="1" fill="rgb(115,115,115)" stroke="#4a4a4a" stroke-width="0.7"/>
<text x="376.17" y="526.20" font-size="5.8" fill="#2a2a2a" text-anchor="middle">45</text>
<rect x="396.60" y="496.8" width="37.9" height="33" rx="1.5" fill="url(#bb)" stroke="#929292" stroke-width="0.8"/>
<rect x="398.80" y="499.4" width="33.6" height="18.4" rx="1" fill="rgb(128,128,128)" stroke="#4a4a4a" stroke-width="0.7"/>
<text x="415.70" y="526.20" font-size="5.8" fill="#2a2a2a" text-anchor="middle">50</text>
<rect x="436.13" y="496.8" width="37.9" height="33" rx="1.5" fill="url(#bb)" stroke="#929292" stroke-width="0.8"/>
<rect x="438.33" y="499.4" width="33.6" height="18.4" rx="1" fill="rgb(140,140,140)" stroke="#4a4a4a" stroke-width="0.7"/>
<text x="455.23" y="526.20" font-size="5.8" fill="#2a2a2a" text-anchor="middle">55</text>
<rect x="475.66" y="496.8" width="37.9" height="33" rx="1.5" fill="url(#bb)" stroke="#929292" stroke-width="0.8"/>
<rect x="477.86" y="499.4" width="33.6" height="18.4" rx="1" fill="rgb(153,153,153)" stroke="#4a4a4a" stroke-width="0.7"/>
<text x="494.76" y="526.20" font-size="5.8" fill="#2a2a2a" text-anchor="middle">60</text>
<rect x="515.19" y="496.8" width="37.9" height="33" rx="1.5" fill="url(#bb)" stroke="#929292" stroke-width="0.8"/>
<rect x="517.39" y="499.4" width="33.6" height="18.4" rx="1" fill="rgb(166,166,166)" stroke="#4a4a4a" stroke-width="0.7"/>
<text x="534.29" y="526.20" font-size="5.8" fill="#2a2a2a" text-anchor="middle">65</text>
<rect x="554.72" y="496.8" width="37.9" height="33" rx="1.5" fill="url(#bb)" stroke="#929292" stroke-width="0.8"/>
<rect x="556.92" y="499.4" width="33.6" height="18.4" rx="1" fill="rgb(178,178,178)" stroke="#4a4a4a" stroke-width="0.7"/>
<text x="573.82" y="526.20" font-size="5.8" fill="#2a2a2a" text-anchor="middle">70</text>
<rect x="594.25" y="496.8" width="37.9" height="33" rx="1.5" fill="url(#bb)" stroke="#929292" stroke-width="0.8"/>
<rect x="596.45" y="499.4" width="33.6" height="18.4" rx="1" fill="rgb(191,191,191)" stroke="#4a4a4a" stroke-width="0.7"/>
<text x="613.35" y="526.20" font-size="5.8" fill="#2a2a2a" text-anchor="middle">75</text>
<rect x="633.78" y="496.8" width="37.9" height="33" rx="1.5" fill="url(#bb)" stroke="#929292" stroke-width="0.8"/>
<rect x="635.98" y="499.4" width="33.6" height="18.4" rx="1" fill="rgb(204,204,204)" stroke="#4a4a4a" stroke-width="0.7"/>
<text x="652.88" y="526.20" font-size="5.8" fill="#2a2a2a" text-anchor="middle">80</text>
<rect x="673.31" y="496.8" width="37.9" height="33" rx="1.5" fill="url(#bb)" stroke="#929292" stroke-width="0.8"/>
<rect x="675.51" y="499.4" width="33.6" height="18.4" rx="1" fill="rgb(217,217,217)" stroke="#4a4a4a" stroke-width="0.7"/>
<text x="692.41" y="526.20" font-size="5.8" fill="#2a2a2a" text-anchor="middle">85</text>
<rect x="712.84" y="496.8" width="37.9" height="33" rx="1.5" fill="url(#bb)" stroke="#929292" stroke-width="0.8"/>
<rect x="715.04" y="499.4" width="33.6" height="18.4" rx="1" fill="rgb(230,230,230)" stroke="#4a4a4a" stroke-width="0.7"/>
<text x="731.94" y="526.20" font-size="5.8" fill="#2a2a2a" text-anchor="middle">90</text>
<rect x="752.37" y="496.8" width="37.9" height="33" rx="1.5" fill="url(#bb)" stroke="#929292" stroke-width="0.8"/>
<rect x="754.57" y="499.4" width="33.6" height="18.4" rx="1" fill="rgb(242,242,242)" stroke="#4a4a4a" stroke-width="0.7"/>
<text x="771.47" y="526.20" font-size="5.8" fill="#2a2a2a" text-anchor="middle">95</text>
<rect x="791.90" y="496.8" width="38.2" height="33" rx="1.5" fill="#1c1c1c"/>
<rect x="794.30" y="499.2" width="33.2" height="18.8" rx="1" fill="#ffffff" stroke="#000" stroke-width="0.6"/>
<text x="811.00" y="526.20" font-size="5.8" fill="#ffffff" text-anchor="middle" font-weight="bold">100</text>
<defs><linearGradient id="bb" x1="0" x2="0" y1="0" y2="1"><stop offset="0" stop-color="#7c7c7c"/><stop offset="0.6" stop-color="#6e6e6e"/><stop offset="1" stop-color="#646464"/></linearGradient><linearGradient id="cb" x1="0" x2="0" y1="0" y2="1"><stop offset="0" stop-color="#8a8a8a"/><stop offset="1" stop-color="#5c5c5c"/></linearGradient><linearGradient id="ic" x1="0" x2="0" y1="0" y2="1"><stop offset="0" stop-color="#a6a6a6"/><stop offset="1" stop-color="#7c7c7c"/></linearGradient><linearGradient id="nb" x1="0" x2="0" y1="0" y2="1"><stop offset="0" stop-color="#9a9a9a"/><stop offset="1" stop-color="#6a6a6a"/></linearGradient></defs>
<rect x="25.50" y="528.60" width="178.50" height="1.60" fill="#e8e8e8" />
<rect x="832.2" y="496.8" width="24.2" height="9.6" fill="url(#cb)" stroke="#8e8e8e" stroke-width="0.6"/>
<ellipse cx="844.3" cy="501.4" rx="3.6" ry="2.6" fill="#5a5a5a"/>
<path d="M842.4 502.6H846.2L844.3 500.2Z" fill="#1a1a1a"/>
<rect x="832.2" y="507.2" width="24.2" height="21.2" fill="url(#cb)" stroke="#8e8e8e" stroke-width="0.6"/>
<rect x="836.4" y="509.4" width="15.6" height="15.6" rx="2" fill="#6a6a6a" stroke="#1c1c1c" stroke-width="1"/>
<rect x="840.6" y="513.8" width="7.4" height="7.4" fill="#050505"/>
<rect x="857.60" y="496.8" width="23.0" height="15.2" fill="url(#cb)" stroke="#8e8e8e" stroke-width="0.6"/>
<circle cx="869.10" cy="504.4" r="4.7" fill="url(#ic)" stroke="#555" stroke-width="0.5"/>
<rect x="867.20" y="502.5" width="3.8" height="3.8" fill="#151515"/>
<rect x="881.30" y="496.8" width="23.0" height="15.2" fill="url(#cb)" stroke="#8e8e8e" stroke-width="0.6"/>
<circle cx="892.80" cy="504.4" r="4.7" fill="url(#ic)" stroke="#555" stroke-width="0.5"/>
<path d="M891.20 502.0V506.79999999999995L895.20 504.4Z" fill="#151515"/>
<rect x="905.00" y="496.8" width="23.0" height="15.2" fill="url(#cb)" stroke="#8e8e8e" stroke-width="0.6"/>
<circle cx="916.50" cy="504.4" r="4.7" fill="url(#ic)" stroke="#555" stroke-width="0.5"/>
<path d="M914.00 501.4V507.4M919.00 501.4V507.4" fill="none" stroke="#1c1c1c" stroke-width="1.3"/>
<path d="M914.00 504.2H919.00" stroke="#1c1c1c" stroke-width="1.5"/>
<path d="M914.00 501.4H919.00M914.00 507.4H919.00" stroke="#1c1c1c" stroke-width="0.6"/>
<rect x="928.70" y="496.8" width="23.0" height="15.2" fill="url(#cb)" stroke="#8e8e8e" stroke-width="0.6"/>
<circle cx="940.20" cy="504.4" r="4.7" fill="url(#ic)" stroke="#555" stroke-width="0.5"/>
<path d="M940.20 504.4C939.00 502.4 936.80 502.4 936.80 504.4C936.80 506.4 939.00 506.4 940.20 504.4C941.40 502.4 943.60 502.4 943.60 504.4C943.60 506.4 941.40 506.4 940.20 504.4Z" fill="none" stroke="#151515" stroke-width="1.1"/>
<rect x="952.40" y="496.8" width="23.0" height="15.2" fill="url(#cb)" stroke="#8e8e8e" stroke-width="0.6"/>
<circle cx="963.90" cy="504.4" r="4.7" fill="url(#ic)" stroke="#555" stroke-width="0.5"/>
<path d="M961.30 504.79999999999995A2.6 2.6 0 0 1 965.70 502.5M966.50 504.0A2.6 2.6 0 0 1 962.10 506.29999999999995" fill="none" stroke="#151515" stroke-width="1.2"/>
<path d="M964.50 501.0L967.10 502.79999999999995L964.70 503.79999999999995Z M963.30 507.79999999999995L960.70 506.0L963.10 505.0Z" fill="#151515"/>
<rect x="976.20" y="496.80" width="24.00" height="15.20" fill="#2a2a2a" />
<circle cx="987" cy="504.4" r="5" fill="#3a3a3a"/>
<rect x="857.6" y="513.0" width="70.6" height="15.3" fill="url(#nb)" stroke="#9c9c9c" stroke-width="0.6"/>
<rect x="928.9" y="513.0" width="71.6" height="15.3" fill="url(#nb)" stroke="#9c9c9c" stroke-width="0.6"/>
<circle cx="873" cy="520.6" r="4.7" fill="url(#ic)" stroke="#555" stroke-width="0.5"/>
<path d="M873.2 518.4L871 520.6L873.2 522.8M875.6 518.4L873.4 520.6L875.6 522.8" fill="none" stroke="#1e1e1e" stroke-width="1.2"/>
<circle cx="985" cy="520.6" r="4.7" fill="url(#ic)" stroke="#555" stroke-width="0.5"/>
<path d="M982.6 518.4L984.8 520.6L982.6 522.8M985 518.4L987.2 520.6L985 522.8" fill="none" stroke="#1e1e1e" stroke-width="1.2"/>
<text x="887.00" y="525.00" font-size="12.4" fill="#242424" textLength="26.80" lengthAdjust="spacingAndGlyphs" stroke="#242424" stroke-width="0.25">Back</text>
<text x="942.50" y="525.00" font-size="12.4" fill="#242424" textLength="27.50" lengthAdjust="spacingAndGlyphs" stroke="#242424" stroke-width="0.25">Next</text>
</svg></body></html>
